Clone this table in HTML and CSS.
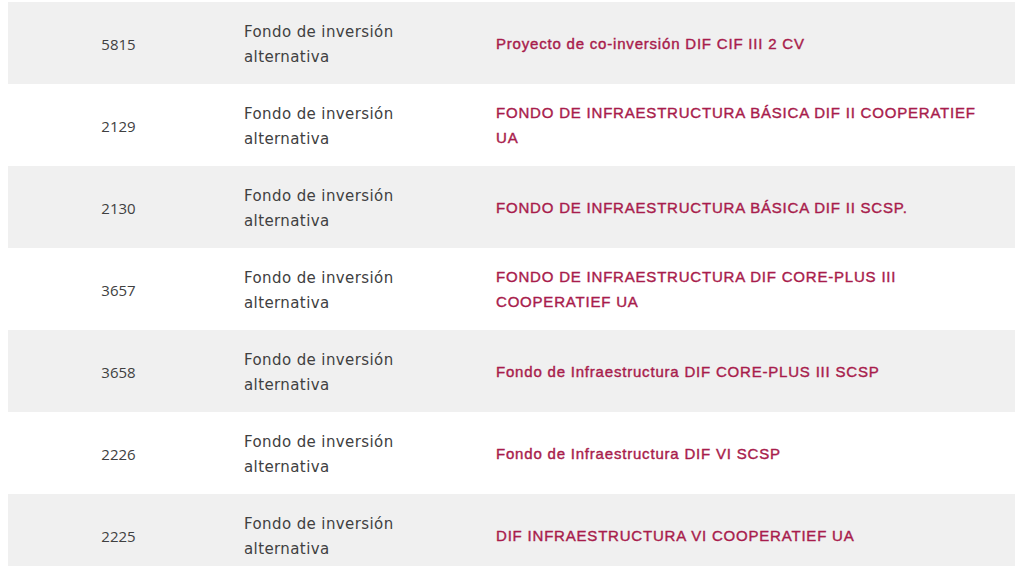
FILE: index.html
```html
<!DOCTYPE html>
<html lang="es">
<head>
<meta charset="utf-8">
<title>Fondos</title>
<link rel="stylesheet" href="styles.css">
</head>
<body>
<div class="wrap">
<table class="funds">
<colgroup><col class="c-id"><col class="c-type"><col class="c-name"></colgroup>
<tbody>
<tr><td class="id">5815</td><td class="type">Fondo de inversión alternativa</td><td class="name"><a href="#">Proyecto de co-inversión DIF CIF III 2 CV</a></td></tr>
<tr><td class="id">2129</td><td class="type">Fondo de inversión alternativa</td><td class="name"><a href="#">FONDO DE INFRAESTRUCTURA BÁSICA DIF II COOPERATIEF UA</a></td></tr>
<tr><td class="id">2130</td><td class="type">Fondo de inversión alternativa</td><td class="name"><a href="#">FONDO DE INFRAESTRUCTURA BÁSICA DIF II SCSP.</a></td></tr>
<tr><td class="id">3657</td><td class="type">Fondo de inversión alternativa</td><td class="name"><a href="#">FONDO DE INFRAESTRUCTURA DIF CORE-PLUS III COOPERATIEF UA</a></td></tr>
<tr><td class="id">3658</td><td class="type">Fondo de inversión alternativa</td><td class="name"><a href="#">Fondo de Infraestructura DIF CORE-PLUS III SCSP</a></td></tr>
<tr><td class="id">2226</td><td class="type">Fondo de inversión alternativa</td><td class="name"><a href="#">Fondo de Infraestructura DIF VI SCSP</a></td></tr>
<tr><td class="id">2225</td><td class="type">Fondo de inversión alternativa</td><td class="name"><a href="#">DIF INFRAESTRUCTURA VI COOPERATIEF UA</a></td></tr>
</tbody>
</table>
</div>
</body>
</html>
```
FILE: styles.css
```css
html, body {
  margin: 0;
  padding: 0;
  background: #ffffff;
}
.wrap {
  padding: 2px 9px 0 8px;
}
.funds {
  width: 100%;
  border-collapse: collapse;
  table-layout: fixed;
  font-family: "DejaVu Sans", "Liberation Sans", sans-serif;
  font-size: 15px;
  line-height: 25px;
  color: #404041;
}
.c-id { width: 221px; }
.c-type { width: 252px; }
.funds tr { height: 82px; }
.funds tr:nth-child(odd) { background: #f0f0f0; }
.funds td {
  padding: 17px 15px 15px;
  vertical-align: middle;
}
.funds td.id {
  text-align: center;
  font-family: "Open Sans", "Liberation Sans", sans-serif;
}
.funds td.type {
  padding-top: 18px;
  padding-bottom: 14px;
  letter-spacing: 0.4px;
}
.funds td.name {
  padding-top: 16px;
  padding-bottom: 16px;
  padding-right: 30px;
  font-family: "Liberation Sans", Arial, sans-serif;
  letter-spacing: 0.8px;
}
.funds td.name a {
  color: #a81c4c;
  text-decoration: none;
  font-weight: 400;
  -webkit-text-stroke: 0.4px #a81c4c;
}
```
